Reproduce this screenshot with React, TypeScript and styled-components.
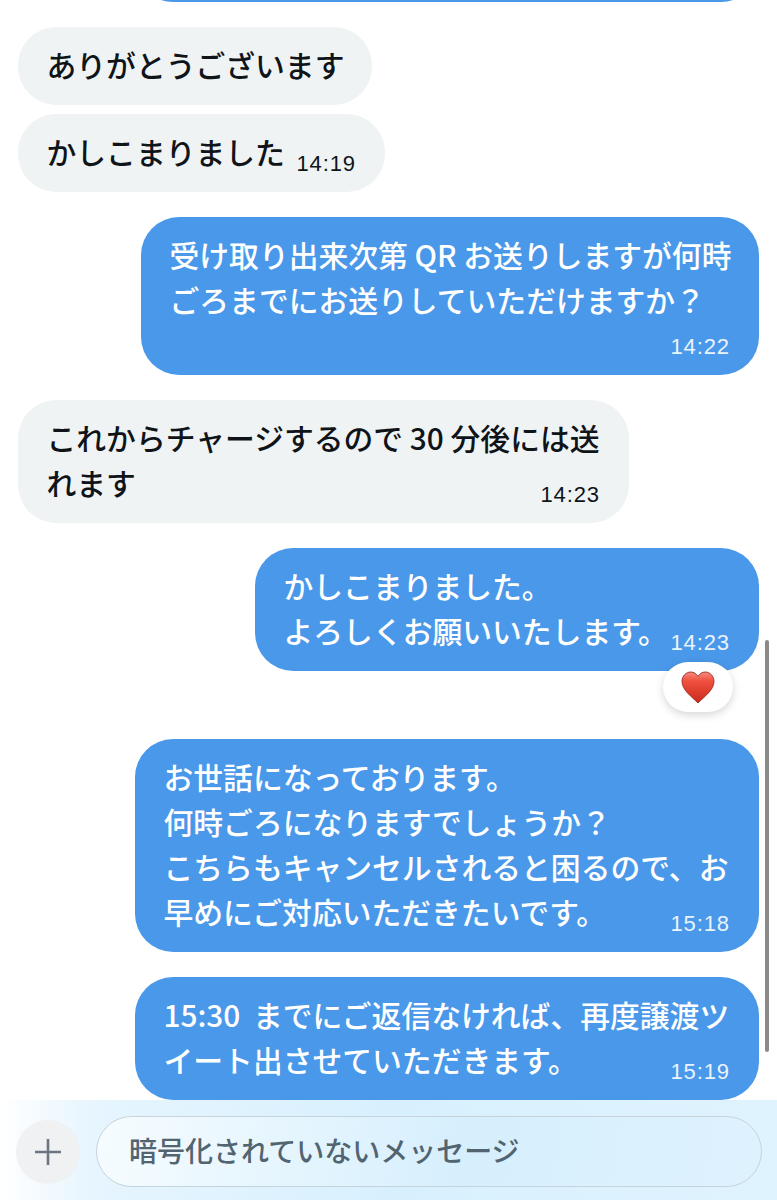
import React from "react";
import styled, { createGlobalStyle, css } from "styled-components";

const GlobalStyle = createGlobalStyle`
  html, body {
    margin: 0;
    padding: 0;
    background: #fff;
  }
  * {
    box-sizing: border-box;
  }
`;

const fontStack = `"Noto Sans CJK JP", "Noto Sans", sans-serif`;

const Page = styled.div`
  position: relative;
  width: 777px;
  height: 1200px;
  overflow: hidden;
  display: flex;
  flex-direction: column;
  font-family: ${fontStack};
  background: #fff;
`;

const Messages = styled.div`
  flex: 1;
  min-height: 0;
  overflow: hidden;
  display: flex;
  flex-direction: column;
  padding: 0 18px;
`;

const Bubble = styled.div<{ $mine?: boolean; $width: number; $gap: number }>`
  position: relative;
  flex-shrink: 0;
  width: ${(p) => p.$width}px;
  margin-top: ${(p) => p.$gap}px;
  padding: 14.5px 29px 18.5px 28.5px;
  border-radius: 38px;
  font-size: 29.8px;
  line-height: 45px;
  font-weight: 500;
  ${(p) =>
    p.$mine
      ? css`
          align-self: flex-end;
          background: #4a98e9;
          color: #fff;
        `
      : css`
          align-self: flex-start;
          background: #eff3f4;
          color: #0f1419;
        `}
`;

const ClippedBubble = styled.div`
  flex-shrink: 0;
  align-self: flex-end;
  width: 624px;
  height: 80px;
  margin-top: -78px;
  border-radius: 38px;
  background: #4a98e9;
`;

const Line = styled.div<{ $wordSpacing?: number }>`
  display: flex;
  justify-content: space-between;
  align-items: flex-end;
  white-space: nowrap;
  word-spacing: ${(p) => p.$wordSpacing ?? 0}px;
`;

const TimeRow = styled.div`
  display: flex;
  justify-content: flex-end;
  height: 35px;
  align-items: flex-end;
`;

const Time = styled.span<{ $mine?: boolean }>`
  font-family: "Liberation Sans", sans-serif;
  font-size: 22px;
  line-height: 24px;
  font-weight: 400;
  letter-spacing: 0.9px;
  margin-bottom: -2px;
  color: ${(p) => (p.$mine ? "#eaf3fd" : "#0f1419")};
`;

const Reaction = styled.div`
  position: absolute;
  right: 26px;
  bottom: -41px;
  width: 70px;
  height: 50px;
  border-radius: 25px;
  background: #fff;
  box-shadow: 0 3px 8px rgba(0, 0, 0, 0.16);
  display: flex;
  align-items: center;
  justify-content: center;
`;

const Scrollbar = styled.div`
  position: absolute;
  left: 765px;
  top: 640px;
  width: 4px;
  height: 412px;
  border-radius: 2px;
  background: #8a8a8a;
`;

const Composer = styled.div`
  flex-shrink: 0;
  height: 100px;
  padding: 16px 15px 13px 16px;
  display: flex;
  align-items: center;
  gap: 16px;
  background: linear-gradient(90deg, #ffffff 0%, #e6f5fe 12%, #d8f0fe 50%, #dff3fe 100%);
`;

const AddButton = styled.div`
  flex-shrink: 0;
  width: 64px;
  height: 64px;
  border-radius: 50%;
  background: #eff1f2;
  display: flex;
  align-items: center;
  justify-content: center;
`;

const Input = styled.div`
  flex: 1;
  height: 71px;
  padding: 0 0 3px 32px;
  border: 1px solid #c6d3da;
  border-radius: 36px;
  display: flex;
  align-items: center;
  font-size: 28px;
  font-weight: 500;
  color: #536471;
  background: linear-gradient(100deg, #f6fcff 0%, #d6effd 55%, #def2fe 100%);
`;

const PlusIcon = () => (
  <svg width="28" height="28" viewBox="0 0 28 28" fill="none" stroke="#6c7680" strokeWidth="2.6">
    <path d="M14 1v26M1 14h26" />
  </svg>
);

const HeartIcon = () => (
  <svg width="34" height="33" viewBox="0 0 34 33">
    <defs>
      <linearGradient id="heartFill" x1="0" y1="0" x2="0" y2="1">
        <stop offset="0" stopColor="#f78a80" />
        <stop offset="0.3" stopColor="#ee4f3e" />
        <stop offset="1" stopColor="#c92a1c" />
      </linearGradient>
    </defs>
    <path
      d="M17 32C11 26 1 19 1 10.5 1 5 5 1 9.8 1c3 0 5.6 1.6 7.2 4.4C18.6 2.6 21.2 1 24.2 1 29 1 33 5 33 10.5 33 19 23 26 17 32Z"
      fill="url(#heartFill)"
      stroke="#8c1f14"
      strokeWidth="0.8"
    />
  </svg>
);

export default function App() {
  return (
    <Page>
      <GlobalStyle />
      <Messages>
        <ClippedBubble />
        <Bubble $width={354} $gap={25}>
          <Line>ありがとうございます</Line>
        </Bubble>
        <Bubble $width={367} $gap={9}>
          <Line>
            かしこまりました
            <Time>14:19</Time>
          </Line>
        </Bubble>
        <Bubble $mine $width={618} $gap={25}>
          <Line>受け取り出来次第 QR お送りしますが何時</Line>
          <Line>ごろまでにお送りしていただけますか？</Line>
          <TimeRow>
            <Time $mine>14:22</Time>
          </TimeRow>
        </Bubble>
        <Bubble $width={611} $gap={25}>
          <Line>これからチャージするので 30 分後には送</Line>
          <Line>
            れます
            <Time>14:23</Time>
          </Line>
        </Bubble>
        <Bubble $mine $width={504} $gap={25}>
          <Line>かしこまりました。</Line>
          <Line>
            よろしくお願いいたします。
            <Time $mine>14:23</Time>
          </Line>
          <Reaction>
            <HeartIcon />
          </Reaction>
        </Bubble>
        <Bubble $mine $width={624} $gap={68}>
          <Line>お世話になっております。</Line>
          <Line>何時ごろになりますでしょうか？</Line>
          <Line>こちらもキャンセルされると困るので、お</Line>
          <Line>
            早めにご対応いただきたいです。
            <Time $mine>15:18</Time>
          </Line>
        </Bubble>
        <Bubble $mine $width={624} $gap={25}>
          <Line $wordSpacing={6}>15:30 までにご返信なければ、再度譲渡ツ</Line>
          <Line>
            イート出させていただきます。
            <Time $mine>15:19</Time>
          </Line>
        </Bubble>
      </Messages>
      <Composer>
        <AddButton>
          <PlusIcon />
        </AddButton>
        <Input>暗号化されていないメッセージ</Input>
      </Composer>
      <Scrollbar />
    </Page>
  );
}
